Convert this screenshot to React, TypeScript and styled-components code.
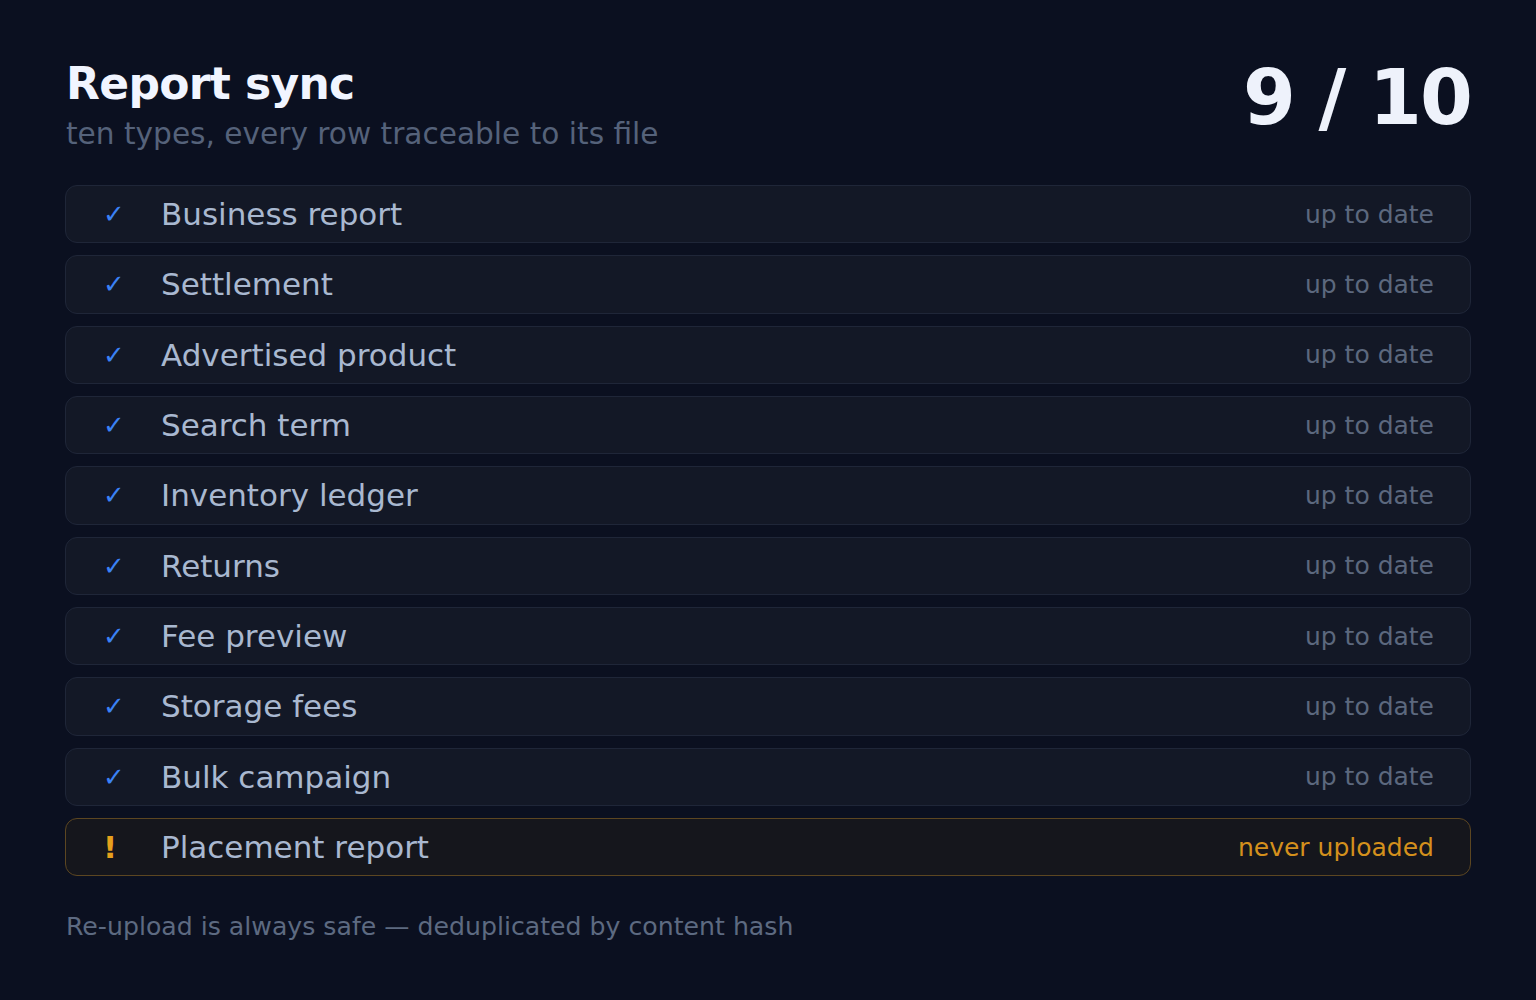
import styled, { createGlobalStyle } from 'styled-components';

const GlobalStyle = createGlobalStyle`
  html, body {
    margin: 0;
    background: #0b1020;
  }
  body {
    font-family: 'DejaVu Sans', 'Liberation Sans', sans-serif;
  }
`;

type Status = 'ok' | 'missing';

const REPORTS: { name: string; status: Status }[] = [
  { name: 'Business report', status: 'ok' },
  { name: 'Settlement', status: 'ok' },
  { name: 'Advertised product', status: 'ok' },
  { name: 'Search term', status: 'ok' },
  { name: 'Inventory ledger', status: 'ok' },
  { name: 'Returns', status: 'ok' },
  { name: 'Fee preview', status: 'ok' },
  { name: 'Storage fees', status: 'ok' },
  { name: 'Bulk campaign', status: 'ok' },
  { name: 'Placement report', status: 'missing' },
];

const Page = styled.main`
  min-height: 1000px;
  box-sizing: border-box;
  padding: 56px 65px 40px 65px;
  background: #0b1020;
`;

const Header = styled.header`
  display: flex;
  justify-content: space-between;
  align-items: flex-start;
  padding-left: 1px;
  margin-bottom: 31px;
`;

const Title = styled.h1`
  margin: 0;
  font-size: 44px;
  line-height: 56px;
  font-weight: 700;
  letter-spacing: -0.015em;
  color: #f1f5ff;
`;

const Subtitle = styled.p`
  margin: 2px 0 0;
  font-size: 29.6px;
  line-height: 40px;
  color: #55627a;
`;

const Count = styled.div`
  font-size: 76px;
  line-height: 80px;
  font-weight: 700;
  letter-spacing: -0.025em;
  color: #eef2fb;
  margin-top: 2px;
`;

const List = styled.ul`
  list-style: none;
  margin: 0;
  padding: 0;
  display: flex;
  flex-direction: column;
  gap: 12px;
`;

const Row = styled.li<{ $status: Status }>`
  display: flex;
  align-items: center;
  height: 58.33px;
  box-sizing: border-box;
  padding: 0 36px 0 37px;
  border-radius: 12px;
  background: ${(p) => (p.$status === 'missing' ? '#15161c' : '#131826')};
  border: 1px solid ${(p) => (p.$status === 'missing' ? '#5c4621' : '#1f2638')};
`;

const Mark = styled.span<{ $status: Status }>`
  width: 58px;
  flex: none;
  font-size: ${(p) => (p.$status === 'missing' ? '31px' : '26px')};
  font-weight: ${(p) => (p.$status === 'missing' ? 700 : 400)};
  color: ${(p) => (p.$status === 'missing' ? '#e5a01c' : '#3b82f6')};
`;

const Label = styled.span`
  flex: 1;
  font-size: 31px;
  color: #a9b8d0;
`;

const State = styled.span<{ $status: Status }>`
  font-size: 25px;
  color: ${(p) => (p.$status === 'missing' ? '#d4901c' : '#5c687e')};
`;

const Footer = styled.p`
  margin: 36px 0 0 1px;
  font-size: 25.2px;
  color: #5d6a81;
`;

export default function App() {
  const synced = REPORTS.filter((r) => r.status === 'ok').length;
  return (
    <Page>
      <GlobalStyle />
      <Header>
        <div>
          <Title>Report sync</Title>
          <Subtitle>ten types, every row traceable to its file</Subtitle>
        </div>
        <Count>
          {synced} / {REPORTS.length}
        </Count>
      </Header>
      <List>
        {REPORTS.map((r) => (
          <Row key={r.name} $status={r.status}>
            <Mark $status={r.status}>{r.status === 'ok' ? '✓' : '!'}</Mark>
            <Label>{r.name}</Label>
            <State $status={r.status}>{r.status === 'ok' ? 'up to date' : 'never uploaded'}</State>
          </Row>
        ))}
      </List>
      <Footer>Re-upload is always safe — deduplicated by content hash</Footer>
    </Page>
  );
}
